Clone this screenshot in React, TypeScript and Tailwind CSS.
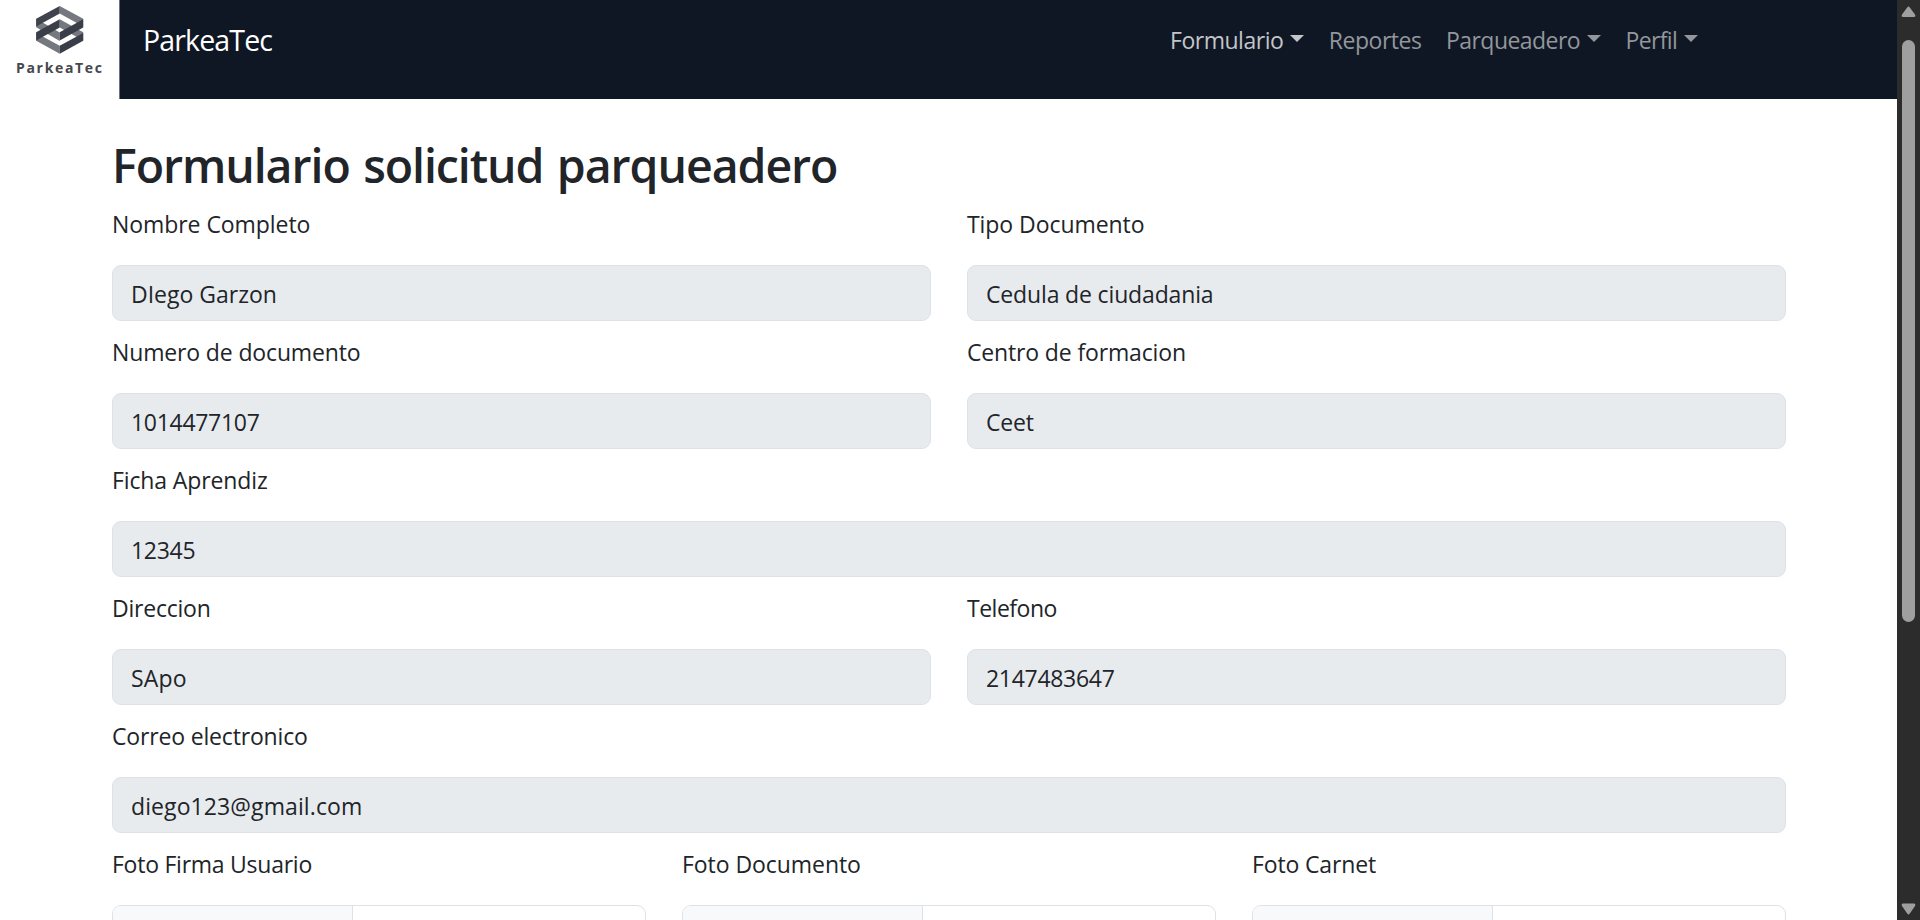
import React from "react";

function Logo() {
  return (
    <svg width="119" height="99" viewBox="0 0 119 99" className="block">
      <path d="M36.2 18.7V27.2L59.7 41V32.5Z" fill="#75787e" />
      <path d="M59.7 19.2V27.5L83.2 40.5V32.2Z" fill="#75787e" />
      <path d="M59.7 6 83.2 18.7V26.6L59.7 13.6Z" fill="#75787e" />
      <path d="M59.7 6 36.2 18.7V26.6L59.7 13.6Z" fill="#3f434d" />
      <path d="M36.2 33V40.7L59.7 53.8V45.8Z" fill="#75787e" />
      <path d="M83.2 33V40.7L59.7 53.8V45.8Z" fill="#3a3e48" />
      <path d="M83.2 19.2V27.6L59.7 40.6V32.3Z" fill="#3a3e48" />
      <path d="M36.2 32.3V40.5L59.7 27.5V19.2Z" fill="#3a3e48" />
      <text x="16" y="73" textLength="86" className="fill-[#45484e] font-['Open_Sans',sans-serif] text-[14px] font-bold">
        ParkeaTec
      </text>
    </svg>
  );
}

function Caret() {
  return <span className="mb-[3px] ml-[7px] h-0 w-0 border-x-[7px] border-t-[7px] border-x-transparent border-t-current" />;
}

function Field({ label, value, t, v }: { label: string; value: string; t: string; v: string }) {
  return (
    <div className="flex-1">
      <div className="h-[51px] leading-[20px]">
        <span className={t}>{label}</span>
      </div>
      <div className="mb-[21px] h-[56px] rounded-[9px] border border-[#dee2e6] bg-[#e8ebee] px-[18px] leading-[56px]">
        <span className={v}>{value}</span>
      </div>
    </div>
  );
}

function FileField({ label, t }: { label: string; t: string }) {
  return (
    <div className="flex-1">
      <div className="h-[51px] leading-[20px]">
        <span className={t}>{label}</span>
      </div>
      <div className="flex h-[56px] overflow-hidden rounded-[9px] border border-[#dee2e6]">
        <div className="w-[240px] border-r border-[#dee2e6] bg-[#f8f9fa]" />
      </div>
    </div>
  );
}

export default function App() {
  return (
    <div className="flex h-[920px] w-[1920px] overflow-hidden bg-white font-['Open_Sans',sans-serif] text-[23px] text-[#212529]">
      <div className="w-[1897px]">
        <header className="flex h-[99px] bg-[#0f1725]">
          <div className="w-[120px] border-r border-[#6b7280] bg-white">
            <Logo />
          </div>
          <div className="ml-[23px] w-[1027px] pt-[18px] text-[28.5px] leading-[44px] tracking-[-0.85px] text-white">
            <span>ParkeaTec</span>
          </div>
          <nav className="flex h-[40px] items-center gap-[24.5px] pt-[40px] tracking-[-0.48px] text-[#93969b]">
            <a className="flex h-0 items-center text-[#c3c5c8]"><span>Formulario</span><Caret /></a>
            <a className="flex h-0 items-center"><span>Reportes</span></a>
            <a className="flex h-0 items-center"><span className="tracking-[-0.55px]">Parqueadero</span><Caret /></a>
            <a className="flex h-0 items-center"><span className="tracking-[-0.65px]">Perfil</span><Caret /></a>
          </nav>
        </header>
        <main className="w-[1786px] pl-[112px] pt-[36px]">
          <h1 className="h-[79px] text-[46.5px] font-semibold leading-[60px] tracking-[-1.08px] [word-spacing:2.5px]">
            <span>Formulario solicitud parqueadero</span>
          </h1>
          <div className="flex gap-[36px]">
            <Field label="Nombre Completo" value="DIego Garzon" t="tracking-[-0.06px]" v="" />
            <Field label="Tipo Documento" value="Cedula de ciudadania" t="tracking-[-0.06px]" v="tracking-[-0.15px]" />
          </div>
          <div className="flex gap-[36px]">
            <Field label="Numero de documento" value="1014477107" t="tracking-[-0.14px]" v="tracking-[-0.3px]" />
            <Field label="Centro de formacion" value="Ceet" t="tracking-[-0.15px]" v="tracking-[-0.2px]" />
          </div>
          <div className="flex">
            <Field label="Ficha Aprendiz" value="12345" t="tracking-[-0.12px]" v="tracking-[-0.3px]" />
          </div>
          <div className="flex gap-[36px]">
            <Field label="Direccion" value="SApo" t="tracking-[-0.22px]" v="tracking-[0.2px]" />
            <Field label="Telefono" value="2147483647" t="tracking-[-0.5px]" v="tracking-[-0.3px]" />
          </div>
          <div className="flex">
            <Field label="Correo electronico" value="diego123@gmail.com" t="tracking-[-0.17px]" v="tracking-[0.1px]" />
          </div>
          <div className="flex gap-[36px]">
            <FileField label="Foto Firma Usuario" t="tracking-[-0.25px]" />
            <FileField label="Foto Documento" t="tracking-[-0.06px]" />
            <FileField label="Foto Carnet" t="tracking-[-0.15px]" />
          </div>
        </main>
      </div>
      <aside className="flex w-[23px] flex-col items-center bg-[#2c2c2c]">
        <svg width="23" height="40" viewBox="0 0 23 40">
          <path d="M10.2 7.4Q11.5 5.6 12.8 7.4L18 14.5Q19 17 17 17H6Q4 17 5 14.5Z" fill="#9f9f9f" />
        </svg>
        <div className="h-[582px] w-[13px] rounded-full bg-[#9f9f9f]" />
        <svg width="23" height="298" viewBox="0 622 23 298">
          <path d="M10.2 913.5Q11.5 915.3 12.8 913.5L18 906Q19 903.5 17 903.5H6Q4 903.5 5 906Z" fill="#9f9f9f" />
        </svg>
      </aside>
    </div>
  );
}
